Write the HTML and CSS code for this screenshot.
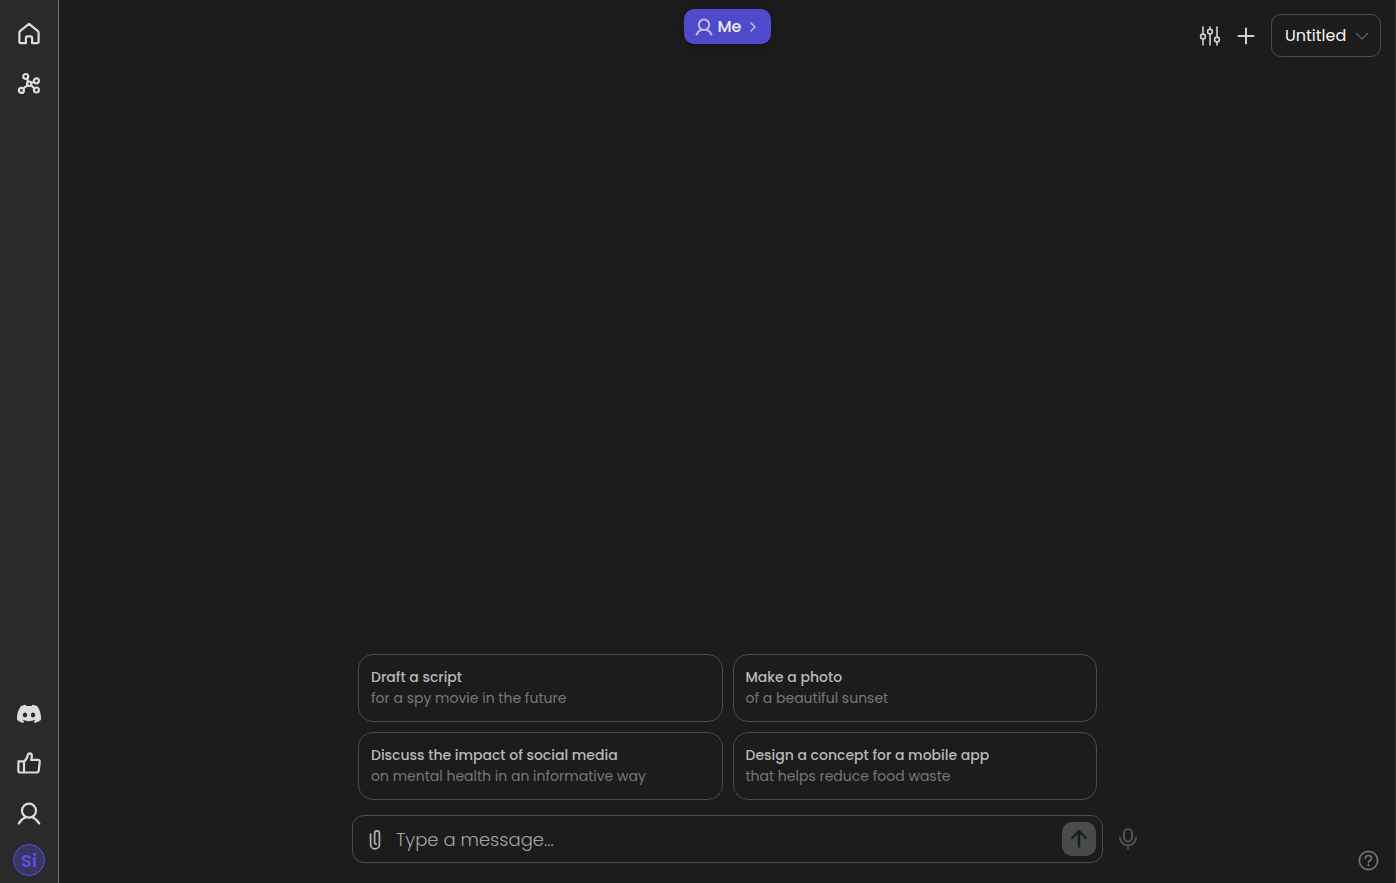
FILE: index.html
```html
<!DOCTYPE html>
<html lang="en">
  <head>
    <meta charset="UTF-8">
    <meta name="viewport" content="width=device-width, initial-scale=1.0">
    <title>Chat</title>
    <link rel="stylesheet" href="styles.css">
  </head>
  <body>
    <nav class="sidebar">
      <div class="sidebar-group">
        <a class="nav-link" href="#" aria-label="Home">
          <svg class="icon" viewBox="0 0 24 24"><path d="M12 1.8 L3 9.2 Q2.4 9.7 2.4 10.6 V19.6 Q2.4 21.2 4 21.2 H8.9 V16 Q8.9 14.4 10.4 14.4 H13.6 Q15.1 14.4 15.1 16 V21.2 H20 Q21.6 21.2 21.6 19.6 V10.6 Q21.6 9.7 21 9.2 Z"/></svg>
        </a>
        <a class="nav-link" href="#" aria-label="Network">
          <svg class="icon" viewBox="0 0 24 24">
            <circle cx="8.7" cy="4.5" r="2.5"/>
            <circle cx="19.4" cy="8.8" r="2.5"/>
            <circle cx="4.4" cy="18.4" r="2.5"/>
            <circle cx="19.4" cy="18" r="2.5"/>
            <circle cx="12.2" cy="11.8" r="2.2"/>
            <path d="M9.8 6.8 L11.3 9.8 M14.3 11 L17 9.8 M10.5 13.4 L6.2 16.6 M13.9 13.2 L17.5 16.4"/>
          </svg>
        </a>
      </div>
      <div class="sidebar-group">
        <a class="nav-link" href="#" aria-label="Discord">
          <svg class="icon icon-solid" viewBox="0 0 24 24"><path fill-rule="evenodd" d="M20.32 4.37a19.8 19.8 0 0 0-4.89-1.52c-.21.38-.45.87-.61 1.25a18.3 18.3 0 0 0-5.49 0c-.16-.38-.4-.87-.62-1.25a19.7 19.7 0 0 0-4.88 1.52C.53 9.05-.32 13.58.1 18.06a20 20 0 0 0 5.99 3.03c.46-.63.87-1.3 1.23-2a13 13 0 0 1-1.9-.93l.38-.3a14.3 14.3 0 0 0 12.4 0l.38.3c-.6.35-1.23.66-1.9.93.35.7.76 1.37 1.22 2a19.9 19.9 0 0 0 6-3.03c.5-5.18-.84-9.68-3.58-13.69zM8 15.33c-1.2 0-2.17-1.1-2.17-2.42S6.8 10.5 8 10.5s2.17 1.09 2.16 2.42c0 1.32-.96 2.41-2.16 2.41zm8 0c-1.2 0-2.17-1.1-2.17-2.42s.96-2.42 2.17-2.42 2.17 1.09 2.16 2.42c0 1.32-.95 2.41-2.16 2.41z"/></svg>
        </a>
        <a class="nav-link" href="#" aria-label="Feedback">
          <svg class="icon" viewBox="0 0 24 24"><path d="M1.4 9.4 H7 V20.5 H2.6 Q1.4 20.5 1.4 19.3 Z M7 9.5 C9.5 7.9 10.3 5.5 10.8 3 Q11.2 1.4 12.6 1.4 Q15 1.6 14.9 4.2 L14.2 7.9 H20.9 Q22.9 7.9 22.7 10 L21.8 18.4 Q21.6 20.5 19.5 20.5 H7"/></svg>
        </a>
        <a class="nav-link" href="#" aria-label="Profile">
          <svg class="icon" viewBox="0 0 24 24"><circle cx="12" cy="8.7" r="7"/><path d="M1.8 21.4 C3.2 18.7 5.6 16.4 8.7 15.2 M22.2 21.4 C20.8 18.7 18.4 16.4 15.3 15.2"/></svg>
        </a>
        <button class="avatar" type="button">Si</button>
      </div>
    </nav>

    <main class="main">
      <header class="topbar">
        <button class="persona" type="button">
          <svg class="persona-icon" viewBox="0 0 24 24"><circle cx="12" cy="9" r="7"/><path d="M2 22 C3.4 18.9 5.8 16.8 8.7 15.6 M22 22 C20.6 18.9 18.2 16.8 15.3 15.6"/></svg>
          <span>Me</span>
          <svg class="persona-arrow" viewBox="0 0 12 12"><path d="M4 2 L8 6 L4 10"/></svg>
        </button>
        <div class="actions">
          <button class="icon-button" type="button" aria-label="Settings">
            <svg class="icon-settings" viewBox="0 0 22 22">
              <path d="M4 2 V9 M4 14 V20 M11 2 V4 M11 9 V20 M18 2 V12 M18 17 V20"/>
              <circle cx="4" cy="11.5" r="2.4"/>
              <circle cx="11" cy="6.6" r="2.4"/>
              <circle cx="18" cy="14.5" r="2.4"/>
            </svg>
          </button>
          <button class="icon-button" type="button" aria-label="New chat">
            <svg class="icon-plus" viewBox="0 0 22 22"><path d="M11 3.5 V18.5 M3.5 11 H18.5"/></svg>
          </button>
          <div class="chat-picker">
            <select class="chat-select" aria-label="Chat">
              <option>Untitled</option>
            </select>
            <svg class="chat-arrow" viewBox="0 0 14 14"><path d="M1.5 4.5 L7 10 L12.5 4.5"/></svg>
          </div>
        </div>
      </header>

      <section class="bottom">
        <div class="suggestions">
          <button class="suggestion" type="button">
            <span class="suggestion-title">Draft a script</span>
            <span class="suggestion-text">for a spy movie in the future</span>
          </button>
          <button class="suggestion" type="button">
            <span class="suggestion-title">Make a photo</span>
            <span class="suggestion-text">of a beautiful sunset</span>
          </button>
          <button class="suggestion" type="button">
            <span class="suggestion-title">Discuss the impact of social media</span>
            <span class="suggestion-text">on mental health in an informative way</span>
          </button>
          <button class="suggestion" type="button">
            <span class="suggestion-title">Design a concept for a mobile app</span>
            <span class="suggestion-text">that helps reduce food waste</span>
          </button>
        </div>

        <div class="composer-row">
          <form class="composer">
            <button class="icon-button" type="button" aria-label="Attach a file">
              <svg class="icon-clip" viewBox="0 0 20 22"><path d="M5.6 6 V16.4 A4.4 4.4 0 0 0 14.4 16.4 V5.2 A2.4 2.4 0 0 0 9.6 5.2 V14.8 Q9.8 16.2 11.2 16.2"/></svg>
            </button>
            <input class="message" type="text" placeholder="Type a message..." aria-label="Message">
            <button class="send" type="submit" aria-label="Send">
              <svg class="icon-send" viewBox="0 0 20 20"><path d="M10 17.6 V2.6 M3.2 9 L10 2.2 L16.8 9"/></svg>
            </button>
          </form>
          <button class="icon-button mic" type="button" aria-label="Voice input">
            <svg class="icon-mic" viewBox="0 0 22 22"><rect x="7" y="1" width="8" height="12.4" rx="4"/><path d="M3 9.4 A8 8 0 0 0 19 9.4 M11 17.6 V20.6"/></svg>
          </button>
        </div>
      </section>
    </main>

    <button class="help" type="button" aria-label="Help">
      <svg class="icon-help" viewBox="0 0 22 22"><circle cx="11" cy="11" r="9.6"/><path d="M7.8 8.8 C7.8 4.8 14.2 4.8 14.2 8.6 C14.2 11 11 11 11 13.2"/><circle class="dot" cx="11" cy="16" r="1.2"/></svg>
    </button>
  </body>
</html>
```

FILE: styles.css
```css
* {
  box-sizing: border-box;
}
body {
  background: #1c1c1c;
  color: #f4f4f4;
  font-family: Poppins, Inter, sans-serif;
  margin: 0;
  min-height: 100vh;
  display: flex;
}
button, input, select {
  font-family: inherit;
  color: inherit;
  margin: 0;
}
button {
  padding: 0;
  border: none;
  background: none;
  cursor: pointer;
}
svg {
  display: block;
  fill: none;
  stroke: currentColor;
  stroke-width: 2;
  stroke-linecap: round;
  stroke-linejoin: round;
}

/* sidebar */
.sidebar {
  width: 59px;
  flex-shrink: 0;
  display: flex;
  flex-direction: column;
  justify-content: space-between;
  padding: 22px 0 7px;
  background: #2a2a2a;
  border-right: 1px solid #757575;
}
.sidebar-group {
  display: flex;
  flex-direction: column;
  align-items: center;
  gap: 26px;
}
.nav-link {
  color: #dcdcdc;
}
.icon {
  width: 24px;
  height: 24px;
  stroke-width: 2.2;
}
.icon-solid {
  fill: currentColor;
  stroke: none;
}
.avatar {
  width: 32px;
  height: 32px;
  margin-top: -8px;
  border: 1px solid #5a50d8;
  border-radius: 50%;
  background: #3a3663;
  color: #5a52e0;
  font-size: 18px;
  font-weight: 600;
}

/* main column */
.main {
  flex: 1;
  min-width: 0;
  display: flex;
  flex-direction: column;
  justify-content: space-between;
  box-shadow: inset -1px 0 #2e2f30;
}
.topbar {
  display: grid;
  grid-template-columns: 1fr auto 1fr;
  align-items: start;
  padding: 9px 15px;
}
.persona {
  grid-column: 2;
  display: flex;
  align-items: center;
  height: 35px;
  padding: 0 11px;
  gap: 5px;
  border-radius: 10px;
  background: #4f4acc;
  box-shadow: 0 2px 8px rgba(0, 0, 0, 0.3);
  color: #eeeefa;
  font-size: 16px;
  font-weight: 500;
}
.persona-icon {
  width: 18px;
  height: 18px;
  stroke-width: 2.6;
  color: #c4c1f0;
}
.persona-arrow {
  width: 14px;
  height: 12px;
  stroke-width: 1.4;
  color: #c4c1f0;
}
.actions {
  justify-self: end;
  display: flex;
  align-items: center;
  gap: 14px;
  padding-top: 5px;
}
.icon-button {
  color: #d2d2d2;
}
.icon-settings,
.icon-plus {
  width: 22px;
  height: 22px;
}
.icon-settings {
  stroke-width: 1.6;
}
.chat-picker {
  position: relative;
}
.chat-select {
  appearance: none;
  width: 110px;
  height: 43px;
  padding: 0 13px;
  border: 1px solid #4b4d4e;
  border-radius: 10px;
  background: transparent;
  font-size: 16px;
}
.chat-arrow {
  position: absolute;
  top: 15px;
  right: 12px;
  width: 14px;
  height: 14px;
  stroke-width: 1.4;
  color: #5c5e5f;
  pointer-events: none;
}

/* suggestions and message box */
.bottom {
  display: flex;
  flex-direction: column;
  gap: 15px;
  padding-bottom: 20px;
}
.suggestions {
  display: grid;
  grid-template-columns: 1fr 1fr;
  gap: 10px;
  width: 100%;
  max-width: 739px;
  margin: 0 auto;
}
.suggestion {
  display: flex;
  flex-direction: column;
  padding: 12px;
  border: 1px solid #4b4b4b;
  border-radius: 15px;
  font-size: 14px;
  line-height: 21px;
  text-align: left;
}
.suggestion-title {
  color: #b8b8b8;
  font-weight: 500;
}
.suggestion-text {
  color: #777;
}
.composer-row {
  display: grid;
  grid-template-columns: 1fr minmax(auto, 751px) 1fr;
  align-items: center;
}
.composer {
  grid-column: 2;
  display: flex;
  align-items: center;
  height: 48px;
  padding: 0 6px 0 12px;
  gap: 11px;
  border: 1px solid #4b4d4e;
  border-radius: 12px;
}
.icon-clip {
  width: 20px;
  height: 22px;
  stroke-width: 1.7;
  color: #b4b4b4;
}
.message {
  flex: 1;
  min-width: 0;
  padding: 0;
  border: none;
  outline: none;
  background: transparent;
  font-size: 18px;
  font-weight: 300;
}
.message::placeholder {
  color: #a4a4a4;
  opacity: 1;
}
.send {
  display: flex;
  align-items: center;
  justify-content: center;
  width: 34px;
  height: 34px;
  border-radius: 10px;
  background: #484b4d;
  color: #1c1c1c;
}
.icon-send {
  width: 20px;
  height: 20px;
  stroke-width: 2.4;
}
.mic {
  justify-self: start;
  margin-left: 14px;
  color: #505050;
}
.icon-mic {
  width: 22px;
  height: 22px;
}

/* floating help */
.help {
  position: fixed;
  right: 17px;
  bottom: 12px;
  color: #757575;
}
.icon-help {
  width: 21px;
  height: 21px;
  stroke-width: 1.7;
}
.dot {
  fill: currentColor;
  stroke: none;
}
```
